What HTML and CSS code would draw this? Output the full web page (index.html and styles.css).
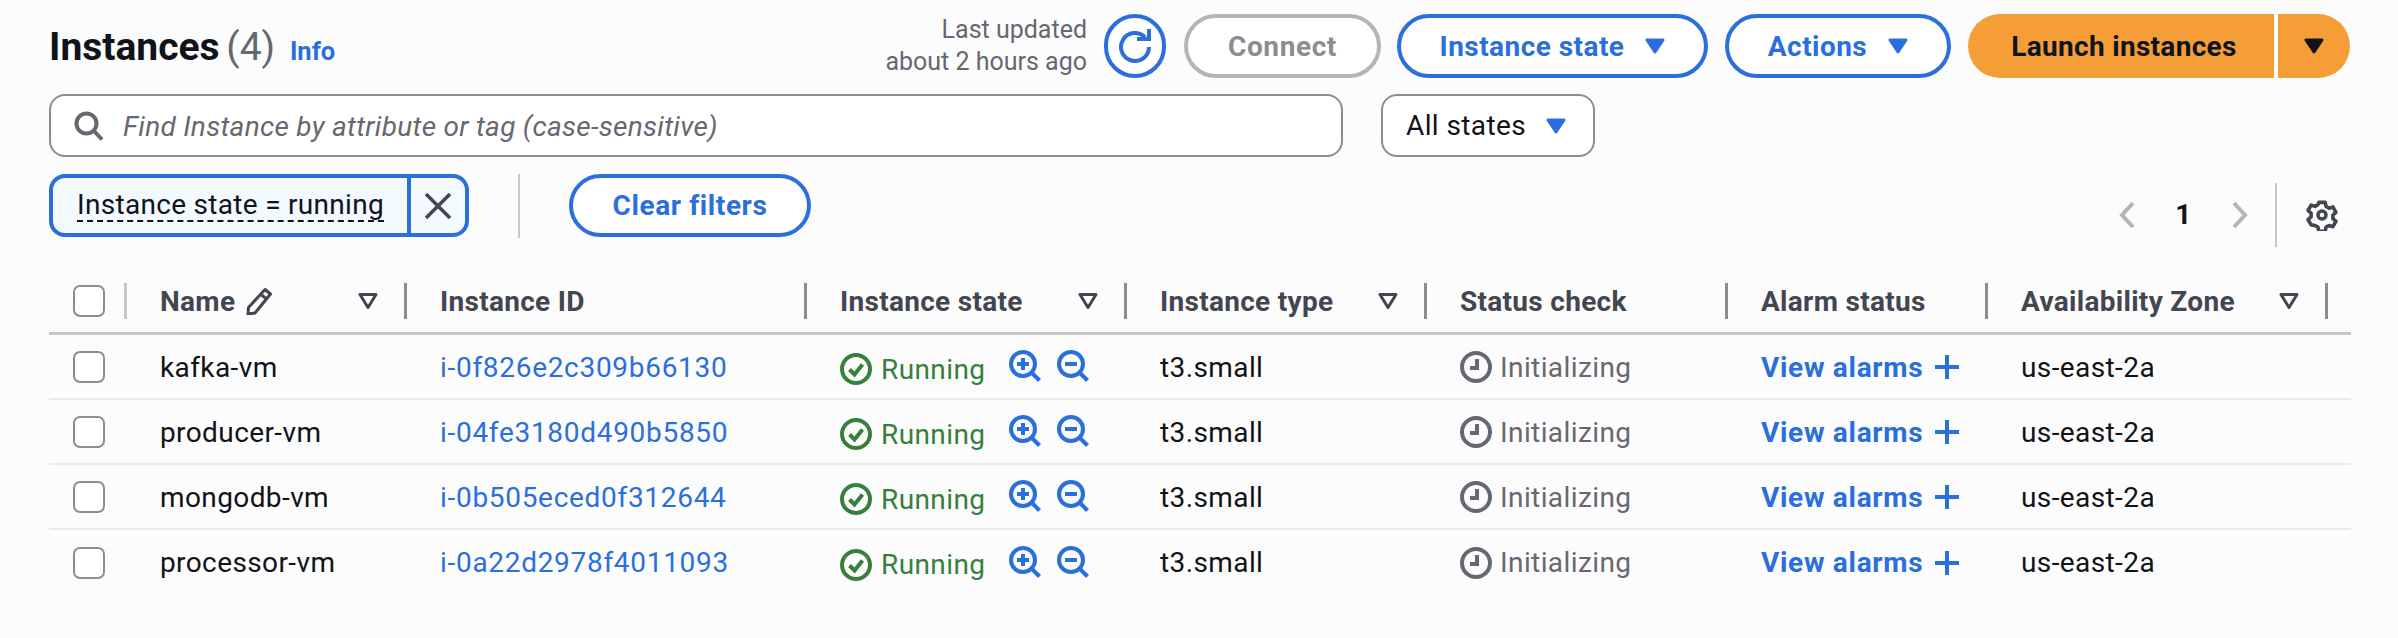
FILE: index.html
```html
<!DOCTYPE html>
<html lang="en">
<head>
<meta charset="UTF-8">
<title>Instances</title>
<link rel="stylesheet" href="styles.css">
</head>
<body>
<svg class="defs" width="0" height="0">
    <symbol id="i-caret" viewBox="0 0 20 16"><path d="M2 2h16l-8 12z" fill="currentColor" stroke="currentColor" stroke-width="3" stroke-linejoin="round"/></symbol>
    <symbol id="i-sort" viewBox="0 0 20 16"><path d="M2 1.5h16l-8 13z" fill="none" stroke="currentColor" stroke-width="3" stroke-linejoin="round"/></symbol>
    <symbol id="i-check" viewBox="0 0 32 32"><circle cx="16" cy="16" r="14" fill="none" stroke="currentColor" stroke-width="4"/><path d="M9.5 16.5l5 5 8-10" fill="none" stroke="currentColor" stroke-width="4"/></symbol>
    <symbol id="i-zoom-in" viewBox="0 0 32 32"><circle cx="14" cy="14" r="12" fill="none" stroke="currentColor" stroke-width="4"/><path d="M22.5 22.5l8 8" fill="none" stroke="currentColor" stroke-width="4"/><path d="M8 14h12M14 8v12" fill="none" stroke="currentColor" stroke-width="4"/></symbol>
    <symbol id="i-zoom-out" viewBox="0 0 32 32"><circle cx="14" cy="14" r="12" fill="none" stroke="currentColor" stroke-width="4"/><path d="M22.5 22.5l8 8" fill="none" stroke="currentColor" stroke-width="4"/><path d="M8 14h12" fill="none" stroke="currentColor" stroke-width="4"/></symbol>
    <symbol id="i-clock" viewBox="0 0 32 32"><circle cx="16" cy="16" r="14" fill="none" stroke="currentColor" stroke-width="4"/><path d="M17 8v9h-7" fill="none" stroke="currentColor" stroke-width="4"/></symbol>
    <symbol id="i-plus" viewBox="0 0 24 24"><path d="M12 0v24M0 12h24" fill="none" stroke="currentColor" stroke-width="4"/></symbol>
</svg>

<main class="page">
    <div class="head-row">
        <h1 class="title">Instances <span class="count">(4)</span> <a class="info">Info</a></h1>
        <div class="actions">
            <div class="updated">Last updated<br>about 2 hours ago</div>
            <button class="btn btn-icon">
                <svg width="32" height="34" viewBox="0 0 32 34"><path d="M30 0v10H18M26 8.200A14 14 0 1 0 30 18" fill="none" stroke="currentColor" stroke-width="4"/></svg>
            </button>
            <button class="btn btn-off btn-connect">Connect</button>
            <button class="btn btn-state">Instance state <svg class="caret"><use href="#i-caret"/></svg></button>
            <button class="btn btn-actions">Actions <svg class="caret"><use href="#i-caret"/></svg></button>
            <div class="split">
                <button class="split-main">Launch instances</button>
                <button class="split-side"><svg class="caret"><use href="#i-caret"/></svg></button>
            </div>
        </div>
    </div>

    <div class="search-row">
        <div class="search">
            <svg width="30" height="30" viewBox="0 0 30 30"><circle cx="12.5" cy="12.5" r="10" fill="none" stroke="currentColor" stroke-width="4"/><path d="M20 20l8 8.500" fill="none" stroke="currentColor" stroke-width="4"/></svg>
            <span>Find Instance by attribute or tag (case-sensitive)</span>
        </div>
        <div class="select">All states <svg class="caret"><use href="#i-caret"/></svg></div>
    </div>

    <div class="filter-row">
        <div class="token">
            <span class="token-label"><span>Instance state = running</span></span>
            <span class="token-x"><svg width="28" height="26" viewBox="0 0 28 26"><path d="M2 1l24 24M26 1L2 25" fill="none" stroke="currentColor" stroke-width="3.500"/></svg></span>
        </div>
        <div class="vline"></div>
        <button class="btn btn-clear">Clear filters</button>
        <div class="pager">
            <svg class="chev" width="16" height="28" viewBox="0 0 16 28"><path d="M14 2L3 14l11 12" fill="none" stroke="currentColor" stroke-width="4"/></svg>
            <span class="page-num">1</span>
            <svg class="chev" width="16" height="28" viewBox="0 0 16 28"><path d="M2 2l11 12L2 26" fill="none" stroke="currentColor" stroke-width="4"/></svg>
            <span class="pager-line"></span>
            <svg class="gear" width="32" height="32" viewBox="0 0 32 32"><path d="M12.500 2h7l1 4.500 3.200 1.900 4.400-1.400 3.400 6-3.400 3v4l3.400 3-3.400 6-4.400-1.400-3.200 1.900-1 4.500h-7l-1-4.500-3.200-1.900L3.900 27 .5 21l3.400-3v-4L.5 11l3.400-6 4.400 1.400 3.200-1.900z" transform="translate(1.600 1.600) scale(.9)" fill="none" stroke="currentColor" stroke-width="4" stroke-linejoin="round"/><circle cx="16" cy="16" r="4" fill="none" stroke="currentColor" stroke-width="3.500"/></svg>
        </div>
    </div>

    <table class="instances">
        <colgroup>
            <col class="c-check"><col class="c-name"><col class="c-id"><col class="c-state">
            <col class="c-type"><col class="c-status"><col class="c-alarm"><col class="c-zone"><col class="c-end">
        </colgroup>
        <thead>
            <tr>
                <th><div class="th-in th-check"><span class="box"></span></div></th>
                <th><div class="th-in"><span class="th-name">Name
                    <svg width="28" height="28" viewBox="0 0 28 28"><path d="M20 2.500l5.500 4.500L10 26l-7 1 .5-6.500zM16 7.500l5.500 4.500" fill="none" stroke="currentColor" stroke-width="3" stroke-linejoin="round"/></svg></span>
                    <svg class="sort"><use href="#i-sort"/></svg></div></th>
                <th><div class="th-in">Instance ID</div></th>
                <th><div class="th-in">Instance state <svg class="sort"><use href="#i-sort"/></svg></div></th>
                <th><div class="th-in">Instance type <svg class="sort"><use href="#i-sort"/></svg></div></th>
                <th><div class="th-in">Status check</div></th>
                <th><div class="th-in">Alarm status</div></th>
                <th><div class="th-in">Availability Zone <svg class="sort"><use href="#i-sort"/></svg></div></th>
                <th></th>
            </tr>
        </thead>
        <tbody>
            <tr>
                <td class="td-check"><span class="box"></span></td>
                <td>kafka-vm</td>
                <td class="link">i-0f826e2c309b66130</td>
                <td><div class="state"><svg class="ok"><use href="#i-check"/></svg><span class="running">Running</span><svg class="mag"><use href="#i-zoom-in"/></svg><svg class="mag"><use href="#i-zoom-out"/></svg></div></td>
                <td>t3.small</td>
                <td><div class="status"><svg><use href="#i-clock"/></svg>Initializing</div></td>
                <td><div class="alarm">View alarms <svg><use href="#i-plus"/></svg></div></td>
                <td>us-east-2a</td>
                <td></td>
            </tr>
            <tr>
                <td class="td-check"><span class="box"></span></td>
                <td>producer-vm</td>
                <td class="link">i-04fe3180d490b5850</td>
                <td><div class="state"><svg class="ok"><use href="#i-check"/></svg><span class="running">Running</span><svg class="mag"><use href="#i-zoom-in"/></svg><svg class="mag"><use href="#i-zoom-out"/></svg></div></td>
                <td>t3.small</td>
                <td><div class="status"><svg><use href="#i-clock"/></svg>Initializing</div></td>
                <td><div class="alarm">View alarms <svg><use href="#i-plus"/></svg></div></td>
                <td>us-east-2a</td>
                <td></td>
            </tr>
            <tr>
                <td class="td-check"><span class="box"></span></td>
                <td>mongodb-vm</td>
                <td class="link">i-0b505eced0f312644</td>
                <td><div class="state"><svg class="ok"><use href="#i-check"/></svg><span class="running">Running</span><svg class="mag"><use href="#i-zoom-in"/></svg><svg class="mag"><use href="#i-zoom-out"/></svg></div></td>
                <td>t3.small</td>
                <td><div class="status"><svg><use href="#i-clock"/></svg>Initializing</div></td>
                <td><div class="alarm">View alarms <svg><use href="#i-plus"/></svg></div></td>
                <td>us-east-2a</td>
                <td></td>
            </tr>
            <tr>
                <td class="td-check"><span class="box"></span></td>
                <td>processor-vm</td>
                <td class="link">i-0a22d2978f4011093</td>
                <td><div class="state"><svg class="ok"><use href="#i-check"/></svg><span class="running">Running</span><svg class="mag"><use href="#i-zoom-in"/></svg><svg class="mag"><use href="#i-zoom-out"/></svg></div></td>
                <td>t3.small</td>
                <td><div class="status"><svg><use href="#i-clock"/></svg>Initializing</div></td>
                <td><div class="alarm">View alarms <svg><use href="#i-plus"/></svg></div></td>
                <td>us-east-2a</td>
                <td></td>
            </tr>
        </tbody>
    </table>
</main>
</body>
</html>
```

FILE: styles.css
```css
* {
    box-sizing: border-box;
}
body {
    margin: 0;
    background-color: #fcfcfc;
    color: #0f141a;
    font-family: Roboto, "Liberation Sans", sans-serif;
    font-size: 28px;
    letter-spacing: .4px;
    height: 638px;
    overflow: hidden;
}
.defs {
    position: absolute;
}
.page {
    padding: 14px 48px 0 49px;
}
button {
    font-family: inherit;
    letter-spacing: .45px;
}
.head-row {
    display: flex;
    justify-content: space-between;
    height: 64px;
}
.title {
    margin: 0;
    font-size: 39px;
    font-weight: 700;
    line-height: 66px;
    letter-spacing: 0;
}
.count {
    font-weight: 400;
    color: #656871;
    margin-left: -3px;
}
.info {
    margin-left: 5px;
    font-size: 25.500px;
    font-weight: 700;
    color: #2a6fdc;
}
.actions {
    display: flex;
    align-items: center;
}
.updated {
    font-size: 25px;
    line-height: 32px;
    letter-spacing: 0;
    text-align: right;
    color: #656871;
    margin-right: 17px;
}
.btn {
    height: 64px;
    border: 4px solid #2a6fdc;
    border-radius: 32px;
    background-color: #fff;
    color: #2a6fdc;
    font-size: 28px;
    font-weight: 700;
    padding: 0;
    display: flex;
    align-items: center;
    justify-content: center;
}
.btn-icon {
    width: 62px;
    margin-right: 18px;
}
.btn-off {
    border-color: #b4b4bb;
    color: #8c8c94;
    letter-spacing: .6px;
}
.btn-connect {
    width: 197px;
    margin-right: 16px;
}
.btn-state {
    width: 311px;
    margin-right: 17px;
}
.btn-actions {
    width: 226px;
    margin-right: 17px;
}
.caret {
    width: 20px;
    height: 16px;
    margin-left: 21px;
    color: #2a6fdc;
}
.split {
    display: flex;
    gap: 4px;
}
.split-main,
.split-side {
    height: 64px;
    border: 0;
    background-color: #f59e38;
    color: #0f141a;
    font-size: 28px;
    font-weight: 700;
    padding: 0;
}
.split-main {
    width: 306px;
    padding-left: 6px;
    border-radius: 32px 0 0 32px;
    letter-spacing: .3px;
}
.split-side {
    width: 72px;
    border-radius: 0 32px 32px 0;
    display: flex;
    align-items: center;
    justify-content: center;
}
.split-side .caret {
    margin: 0;
    color: #0f141a;
}
.search-row {
    display: flex;
    gap: 38px;
    margin-top: 16px;
}
.search {
    width: 1294px;
    height: 63px;
    border: 2px solid #8c8c94;
    border-radius: 16px;
    background-color: #fff;
    display: flex;
    align-items: center;
    padding-left: 23px;
    gap: 19px;
    color: #656871;
    font-style: italic;
    letter-spacing: .28px;
}
.search span {
    padding-top: 2px;
}
.select {
    width: 214px;
    height: 63px;
    border: 2px solid #8c8c94;
    border-radius: 16px;
    background-color: #fff;
    display: flex;
    align-items: center;
    padding-left: 23px;
}
.select .caret {
    margin-left: 20px;
}
.filter-row {
    display: flex;
    align-items: center;
    margin-top: 17px;
    height: 63px;
}
.token {
    width: 420px;
    height: 63px;
    border: 4px solid #2a6fdc;
    border-radius: 16px;
    background-color: #f2f9ff;
    display: flex;
}
.token-label {
    width: 358px;
    border-right: 4px solid #2a6fdc;
    padding-left: 24px;
    display: flex;
    align-items: center;
    letter-spacing: .3px;
}
.token-label span {
    border-bottom: 2px dashed #0f141a;
    line-height: 30px;
    white-space: nowrap;
}
.token-x {
    flex: 1;
    display: flex;
    align-items: center;
    justify-content: center;
    color: #424650;
}
.vline {
    width: 2px;
    height: 64px;
    margin-left: 49px;
    background-color: #c6c6cd;
}
.btn-clear {
    width: 242px;
    height: 63px;
    margin-left: 49px;
    letter-spacing: .6px;
}
.pager {
    margin-left: auto;
    display: flex;
    align-items: center;
    height: 64px;
    position: relative;
    top: 9px;
}
.chev {
    color: #b4b4bb;
}
.page-num {
    width: 97px;
    text-align: center;
    font-weight: 700;
}
.pager-line {
    width: 2px;
    height: 64px;
    margin-left: 27px;
    background-color: #c6c6cd;
}
.gear {
    margin: 0 12px 0 29px;
    color: #424650;
}
.instances {
    width: 2302px;
    table-layout: fixed;
    border-collapse: collapse;
    margin-top: 46px;
}
.c-check { width: 78px; }
.c-name { width: 280px; }
.c-id { width: 400px; }
.c-state { width: 320px; }
.c-type { width: 300px; }
.c-status { width: 301px; }
.c-alarm { width: 260px; }
.c-zone { width: 340px; }
.c-end { width: 23px; }
th {
    padding: 0 0 13px;
    border-bottom: 3px solid #c6c6cd;
    text-align: left;
    color: #424650;
    font-weight: 700;
    font-size: 28px;
    letter-spacing: .3px;
}
.th-in {
    height: 36px;
    border-right: 3px solid #8c8c94;
    padding: 0 26px 0 33px;
    display: flex;
    align-items: center;
    justify-content: space-between;
}
.th-check {
    border-right-color: #c6c6cd;
    padding: 0 0 0 24px;
}
.th-name {
    display: flex;
    align-items: center;
    gap: 10px;
}
.sort {
    width: 20px;
    height: 16px;
}
.box {
    display: block;
    width: 32px;
    height: 32px;
    border: 2px solid #8c8c94;
    border-radius: 7px;
    background-color: #fff;
}
td {
    height: 65px;
    padding: 2px 0 0 33px;
    border-bottom: 2px solid #e9ebed;
    white-space: nowrap;
}
tbody tr:last-child td {
    border-bottom: 0;
}
.td-check {
    padding-left: 24px;
}
.link {
    color: #2a6fdc;
    letter-spacing: .7px;
}
.state,
.status,
.alarm {
    display: flex;
    align-items: center;
}
.ok {
    width: 32px;
    height: 32px;
    color: #377f3c;
    margin-top: 4px;
}
.running {
    margin: 4px 24px 0 9px;
    color: #377f3c;
}
.mag {
    width: 32px;
    height: 32px;
    margin: -2px 16px 0 0;
    color: #2a6fdc;
}
.status {
    color: #656871;
}
.status svg {
    width: 32px;
    height: 32px;
    margin-right: 8px;
}
.alarm {
    color: #2a6fdc;
    font-weight: 700;
    letter-spacing: .7px;
}
.alarm svg {
    width: 24px;
    height: 24px;
    margin-left: 12px;
}
```
